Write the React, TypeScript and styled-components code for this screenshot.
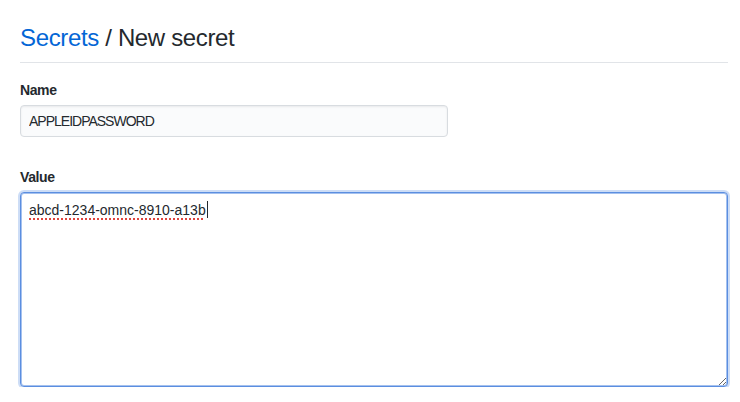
import React from "react";
import styled, { createGlobalStyle } from "styled-components";

const GlobalStyle = createGlobalStyle`
  html, body {
    margin: 0;
    padding: 0;
    background: #ffffff;
  }
  body {
    font-family: "Liberation Sans", Arial, sans-serif;
    color: #24292e;
  }
`;

const Page = styled.div`
  padding: 20px 12px 0 20px;
`;

const Subhead = styled.div`
  padding-bottom: 6px;
  margin-bottom: 17px;
  border-bottom: 1px solid #e1e4e8;
`;

const Title = styled.h2`
  margin: 0;
  font-size: 24px;
  line-height: 36px;
  font-weight: 400;
  letter-spacing: -0.35px;
  color: #24292e;
`;

const Crumb = styled.a`
  color: #0366d6;
  text-decoration: none;
`;

const Field = styled.div<{ $gap?: number }>`
  display: flex;
  flex-direction: column;
  align-items: flex-start;
  margin-top: ${(p) => p.$gap ?? 0}px;
`;

const Label = styled.label`
  font-size: 14px;
  line-height: 21px;
  font-weight: 700;
  letter-spacing: -0.4px;
  margin-bottom: 4px;
`;

const NameInput = styled.input`
  box-sizing: border-box;
  width: 428px;
  height: 32px;
  padding: 5px 8px;
  font-family: "Liberation Sans", Arial, sans-serif;
  font-size: 14px;
  line-height: 20px;
  letter-spacing: -1px;
  color: #24292e;
  background: #fafbfc;
  border: 1px solid #d8dce0;
  border-radius: 4px;
  box-shadow: inset 0 1px 2px rgba(27, 31, 35, 0.075);
  outline: none;
`;

const ValueBox = styled.div`
  box-sizing: border-box;
  width: 708px;
  height: 195px;
  padding: 7px 8px;
  font-size: 14px;
  line-height: 20px;
  color: #24292e;
  background: #ffffff;
  border: 1px solid #5b8ee0;
  border-radius: 4px;
  box-shadow: inset 0 0 0 1px rgba(91, 142, 224, 0.55),
    0 0 0 2px rgba(91, 142, 224, 0.3);
  resize: both;
  overflow: auto;
`;

const Misspelled = styled.span`
  text-decoration: underline dotted #e0443e;
  text-decoration-thickness: 1.5px;
  text-underline-offset: 3px;
`;

const Caret = styled.span`
  display: inline-block;
  width: 1px;
  height: 17px;
  margin-left: 1px;
  vertical-align: -3px;
  background: #24292e;
`;

export default function App() {
  return (
    <>
      <GlobalStyle />
      <Page>
        <Subhead>
          <Title>
            <Crumb href="#">Secrets</Crumb> / New secret
          </Title>
        </Subhead>
        <Field>
          <Label htmlFor="secret-name">Name</Label>
          <NameInput id="secret-name" readOnly defaultValue="APPLEIDPASSWORD" />
        </Field>
        <Field $gap={30}>
          <Label>Value</Label>
          <ValueBox>
            <Misspelled>abcd-1234-omnc-8910-a13b</Misspelled>
            <Caret />
          </ValueBox>
        </Field>
      </Page>
    </>
  );
}
